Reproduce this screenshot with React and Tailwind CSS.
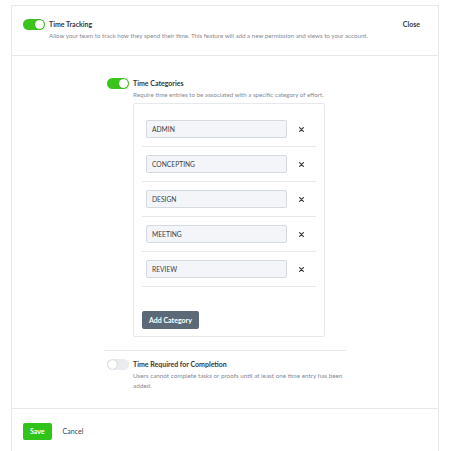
import React from "react";

function Toggle({ on }) {
  return (
    <div
      className={
        "relative w-[22px] h-[11px] rounded-full shrink-0 " +
        (on ? "bg-[#3cc41c]" : "bg-[#e9ebee]")
      }
    >
      <div
        className={
          "absolute top-[1px] w-[9px] h-[9px] rounded-full bg-white shadow-[0_0_1px_rgba(0,0,0,0.35)] " +
          (on ? "right-[1px]" : "left-[1px]")
        }
      />
    </div>
  );
}

function XIcon() {
  return (
    <svg width="5" height="5" viewBox="0 0 5 5" className="block">
      <path d="M0.6 0.6 L4.4 4.4 M4.4 0.6 L0.6 4.4" stroke="#3a3f45" strokeWidth="1.2" strokeLinecap="round" />
    </svg>
  );
}

const cats = ["ADMIN", "CONCEPTING", "DESIGN", "MEETING", "REVIEW"];

export default function App() {
  return (
    <div className="w-[450px] h-[451px] bg-white overflow-hidden font-['Lato',sans-serif] text-[#33373d] pt-[5px] px-[11px]">
      <div className="border border-[#e6e8eb] bg-white h-[460px]">
        {/* header */}
        <div className="flex items-start justify-between pl-[11px] pr-[18px] pt-[13px] h-[50px] border-b border-[#e6e8eb]">
          <div className="flex items-start gap-[4px]">
            <Toggle on />
            <div>
              <div className="text-[7px] font-bold leading-[11px]">Time Tracking</div>
              <div className="text-[6.2px] text-[#858b94] leading-[9px] mt-[1px]">
                Allow your team to track how they spend their time. This feature will add a new permission and views to your account.
              </div>
            </div>
          </div>
          <div className="text-[7px] font-bold leading-[9px] mt-[1px]">Close</div>
        </div>

        {/* body */}
        <div className="h-[353px] border-b border-[#e6e8eb] flex justify-center pt-[22px]">
          <div className="w-[242px]">
            <div className="flex items-start gap-[4px] pl-[3px]">
              <Toggle on />
              <div className="flex-1">
                <div className="text-[7px] font-bold leading-[11px]">Time Categories</div>
                <div className="text-[6.2px] text-[#858b94] leading-[9px] mt-[1px]">
                  Require time entries to be associated with a specific category of effort.
                </div>
                <div className="mt-[4px] w-[192px] border border-[#e6e8eb] rounded-[2px] pt-[8px] pb-[7px]">
                  {cats.map((c) => (
                    <div
                      key={c}
                      className="mx-[8px] pl-[4px] pt-[8px] pb-[8px] border-b border-[#e6e8eb] flex items-center"
                    >
                      <div className="w-[141px] h-[18px] bg-[#f3f5f9] border border-[#d5dae1] rounded-[2px] flex items-center pl-[5px] text-[6.7px] text-[#3d434a]">
                        {c}
                      </div>
                      <div className="flex-1 flex justify-center">
                        <XIcon />
                      </div>
                    </div>
                  ))}
                  <div className="pl-[8px] mt-[18px]">
                    <button className="h-[18px] px-[7px] bg-[#5c6a77] text-white text-[7px] font-bold rounded-[2px]">
                      Add Category
                    </button>
                  </div>
                </div>
              </div>
            </div>

            <div className="mt-[13px] border-t border-[#e6e8eb] pt-[8px] flex items-start gap-[4px] pl-[3px]">
              <Toggle on={false} />
              <div className="flex-1">
                <div className="text-[7px] font-bold leading-[11px]">Time Required for Completion</div>
                <div className="text-[6.3px] text-[#858b94] leading-[10px] mt-[1px] pr-[2px]">
                  Users cannot complete tasks or proofs until at least one time entry has been added.
                </div>
              </div>
            </div>
          </div>
        </div>

        {/* footer */}
        <div className="flex items-center gap-[11px] pl-[11px] pt-[14px]">
          <button className="h-[17px] px-[7px] bg-[#30c41b] text-white text-[7px] font-bold rounded-[2px]">
            Save
          </button>
          <span className="text-[7px] text-[#3a3f45]">Cancel</span>
        </div>
      </div>
    </div>
  );
}
